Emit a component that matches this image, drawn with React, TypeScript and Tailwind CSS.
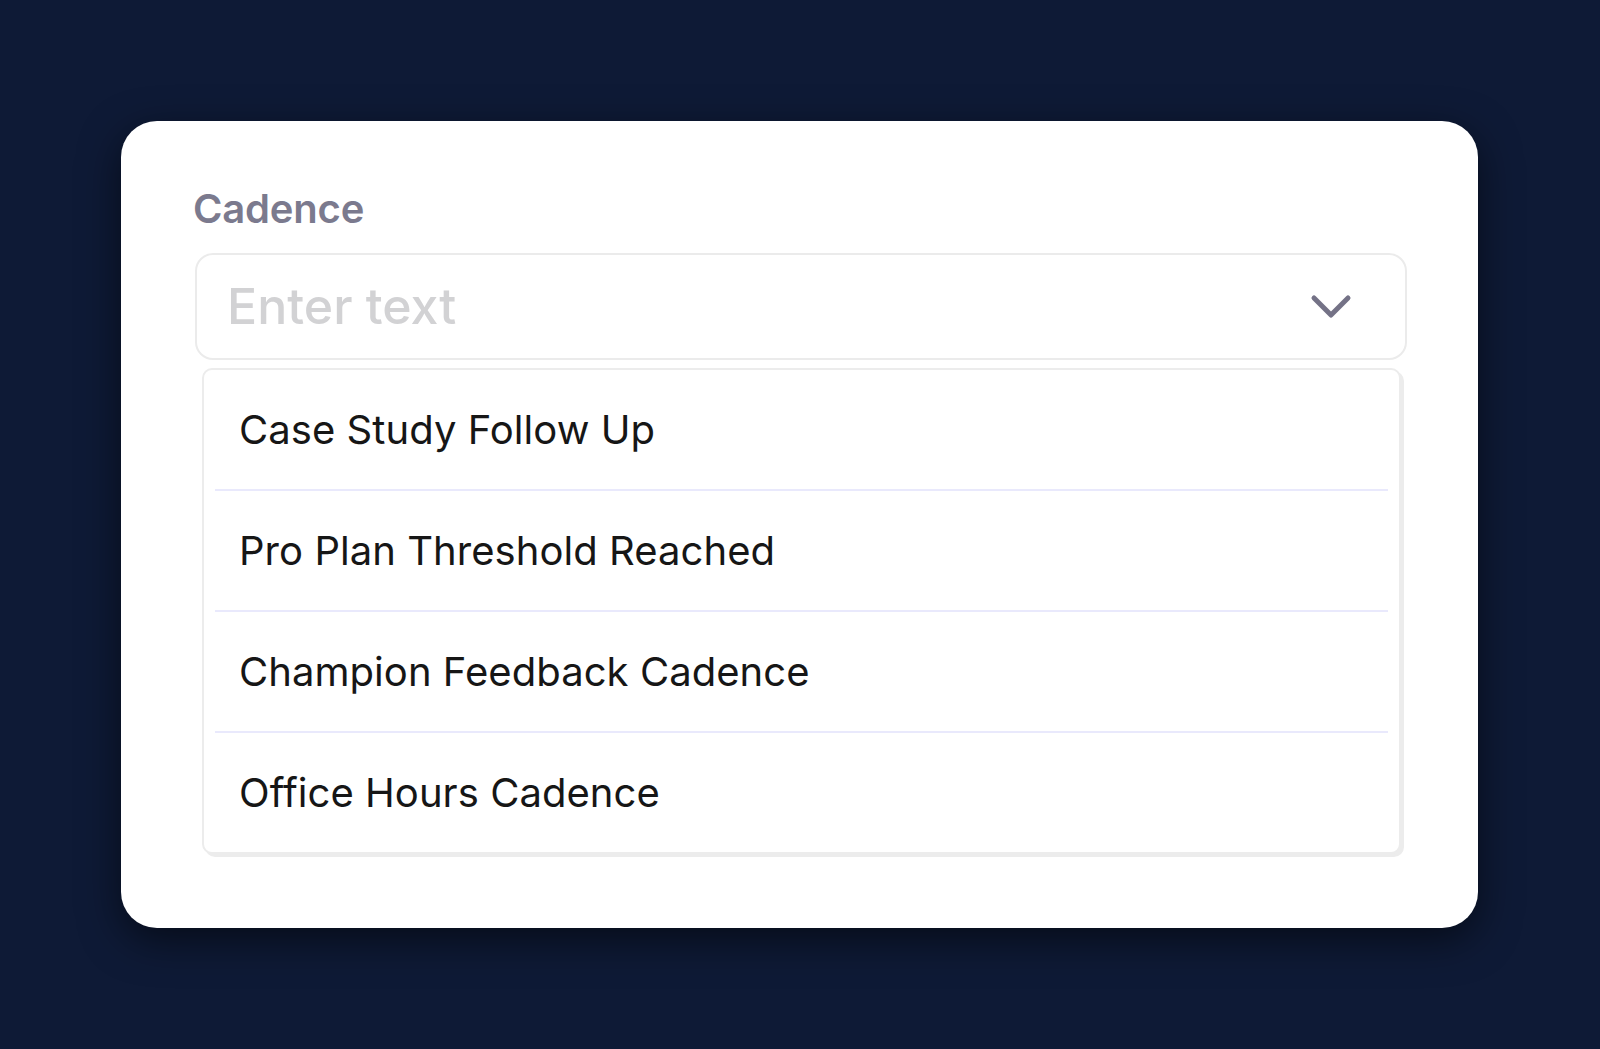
const options = [
  "Case Study Follow Up",
  "Pro Plan Threshold Reached",
  "Champion Feedback Cadence",
  "Office Hours Cadence",
];

function Chevron() {
  return (
    <svg width="42" height="28" viewBox="0 0 42 28" fill="none">
      <polyline
        points="4,5 21,22 38,5"
        stroke="#747286"
        strokeWidth="5"
        strokeLinecap="round"
        strokeLinejoin="round"
      />
    </svg>
  );
}

export default function App() {
  return (
    <div className="min-h-[1049px] w-full bg-[#0e1a36] pt-[121px] pl-[121px] font-['Inter',sans-serif]">
      <div className="w-[1357px] h-[807px] rounded-[36px] bg-white px-[74px] pt-[64px] shadow-[0_12px_40px_rgba(0,0,0,0.55)]">
        {/* label */}
        <div className="-ml-[2px] text-[40px] leading-[48px] font-semibold tracking-[-0.2px] text-[#7b7a8e]">Cadence</div>

        {/* select box */}
        <div className="mt-[20px] w-[1212px] h-[107px] rounded-[18px] border-2 border-[#ebebeb] flex items-center justify-between pl-[30px] pr-[53px]">
          <span className="text-[50px] font-medium text-[#d2d2d4]">Enter text</span>
          <Chevron />
        </div>

        {/* options list */}
        <div className="mt-[8px] ml-[7px] w-[1199px] rounded-[10px] border-2 border-[#ececec] bg-white shadow-[3px_3px_0_#ececec]">
          {options.map((opt, i) => (
            <div key={opt}>
              {i > 0 && <div className="mx-[11px] h-[2px] bg-[#e9e9fc]" />}
              <div className="h-[119px] flex items-center pl-[35px] text-[40px] tracking-[0.05px] text-[#161616]">{opt}</div>
            </div>
          ))}
        </div>
      </div>
    </div>
  );
}
